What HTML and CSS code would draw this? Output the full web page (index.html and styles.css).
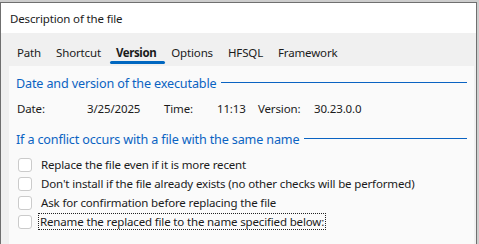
FILE: index.html
```html
<!DOCTYPE html>
<html lang="en">
<head>
    <meta charset="UTF-8">
    <title>Description of the file</title>
    <link rel="stylesheet" href="styles.css">
</head>
<body>
    <div class="window">
        <div class="title-bar">Description of the file</div>
        <div class="window-body">
            <div class="tabs">
                <span class="tab">Path</span>
                <span class="tab">Shortcut</span>
                <span class="tab active">Version</span>
                <span class="tab">Options</span>
                <span class="tab">HFSQL</span>
                <span class="tab">Framework</span>
            </div>
            <div class="panel">
                <div class="group-title">
                    <span>Date and version of the executable</span>
                    <span class="rule"></span>
                </div>
                <div class="info-row">
                    <span class="lbl-date">Date:</span>
                    <span class="val-date">3/25/2025</span>
                    <span class="lbl-time">Time:</span>
                    <span class="val-time">11:13</span>
                    <span class="lbl-version">Version:</span>
                    <span>30.23.0.0</span>
                </div>
                <div class="group-title second">
                    <span>If a conflict occurs with a file with the same name</span>
                    <span class="rule"></span>
                </div>
                <div class="options">
                    <label class="check"><span class="box"></span><span>Replace the file even if it is more recent</span></label>
                    <label class="check"><span class="box"></span><span>Don't install if the file already exists (no other checks will be performed)</span></label>
                    <label class="check"><span class="box"></span><span>Ask for confirmation before replacing the file</span></label>
                    <label class="check"><span class="box"></span><span class="focused">Rename the replaced file to the name specified below:</span></label>
                </div>
            </div>
        </div>
    </div>
</body>
</html>
```

FILE: styles.css
```css
body {
    margin: 0;
    height: 244px;
    background-color: #cdcdcd;
    font-family: "Noto Sans", sans-serif;
    font-size: 11.5px;
    letter-spacing: -0.15px;
    color: #1b1b1b;
    overflow: hidden;
}

.window {
    margin-top: 2px;
    width: 475px;
    height: 242px;
    border: 1px solid #6f6f6f;
    border-bottom: none;
    background-color: #f0f0f0;
    display: flex;
    flex-direction: column;
}

.title-bar {
    height: 30px;
    flex-shrink: 0;
    background-color: #fff;
    padding-left: 9px;
    display: flex;
    align-items: center;
    font-size: 11.5px;
}

.window-body {
    flex: 1;
    padding: 0 2px 0 8px;
    display: flex;
    flex-direction: column;
}

.tabs {
    height: 33px;
    flex-shrink: 0;
    display: flex;
    align-items: flex-end;
    padding-left: 8px;
}

.tab {
    position: relative;
    padding: 0 7px 5px 0;
    margin-right: 8px;
    line-height: 17px;
}

.tab.active {
    font-weight: bold;
    letter-spacing: -0.4px;
    padding-left: 0;
}

.tab.active::after {
    content: "";
    position: absolute;
    left: -6px;
    right: -2px;
    bottom: 2px;
    height: 3px;
    border-radius: 2px;
    background-color: #0067c0;
}

.panel {
    flex: 1;
    background-color: #fafafa;
    padding: 9px 7px 0 7px;
}

.group-title {
    display: flex;
    align-items: center;
    gap: 5px;
    color: #0a63c2;
    font-size: 12.6px;
    line-height: 18px;
}

.group-title.second {
    margin-top: 13px;
}

.rule {
    flex: 1;
    border-top: 1px solid #0a63c2;
    margin-top: -3px;
}

.info-row {
    display: flex;
    padding-left: 1px;
    margin-top: 7px;
    line-height: 18px;
}

.lbl-date { width: 70px; }
.val-date { width: 77px; }
.lbl-time { width: 53px; }
.val-time { width: 41px; }
.lbl-version { width: 56px; }

.options {
    margin-top: 6px;
    padding-left: 2px;
    display: flex;
    flex-direction: column;
}

.check {
    display: flex;
    align-items: center;
    gap: 9px;
    height: 19px;
}

.box {
    width: 12px;
    height: 12px;
    border: 1px solid #cbcbcb;
    border-radius: 3px;
    background-color: #fff;
}

.focused {
    outline: 1px dotted #222;
    padding: 0 1px;
    margin-left: -2px;
}
```
